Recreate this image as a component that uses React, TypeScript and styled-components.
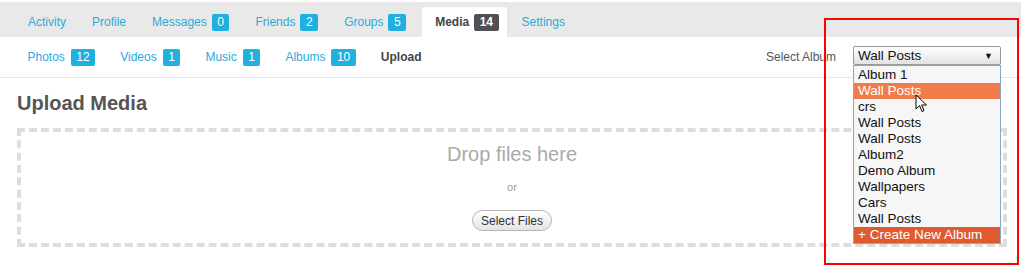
import React from 'react';
import styled, { createGlobalStyle } from 'styled-components';

const GlobalStyle = createGlobalStyle`
  html, body {
    margin: 0;
    padding: 0;
    background: #ffffff;
    font-family: 'Liberation Sans', Arial, sans-serif;
  }
`;

const Page = styled.div`
  position: relative;
  width: 1021px;
  height: 275px;
  padding-top: 2px;
  box-sizing: border-box;
  overflow: hidden;
`;

const MainNav = styled.div`
  display: flex;
  align-items: flex-end;
  height: 35px;
  padding-left: 15px;
  background: #e9e9e9;
`;

const Tab = styled.div<{ $active?: boolean }>`
  display: flex;
  align-items: center;
  gap: 5px;
  height: 30px;
  padding: ${(p) => (p.$active ? '0 8px 0 13px' : '0 13px')};
  font-size: 12px;
  color: ${(p) => (p.$active ? '#444' : '#29a9dd')};
  font-weight: ${(p) => (p.$active ? 'bold' : 'normal')};
  background: ${(p) => (p.$active ? '#ffffff' : 'transparent')};
  border-radius: 3px 3px 0 0;
  margin: ${(p) => (p.$active ? '0 2px 0 3px' : '0')};
`;

const Badge = styled.span<{ $dark?: boolean }>`
  display: inline-block;
  height: 17px;
  line-height: 17px;
  padding: 0 5.5px;
  border-radius: 2px;
  font-size: 12px;
  font-weight: ${(p) => (p.$dark ? 'bold' : 'normal')};
  color: #ffffff;
  background: ${(p) => (p.$dark ? '#505050' : '#1fb0e0')};
`;

const SubNav = styled.div`
  display: flex;
  align-items: center;
  height: 40px;
  padding: 0 20px 0 15px;
  border-bottom: 1px solid #e6e6e6;
`;

const SubTab = styled.div<{ $active?: boolean }>`
  display: flex;
  align-items: center;
  gap: 6px;
  padding: 0 12.5px;
  font-size: 12px;
  color: ${(p) => (p.$active ? '#444' : '#29a9dd')};
  font-weight: ${(p) => (p.$active ? 'bold' : 'normal')};
`;

const Spacer = styled.div`
  flex: 1;
`;

const AlbumLabel = styled.span`
  font-size: 12px;
  color: #555;
  margin-right: 17px;
`;

const SelectWrap = styled.div`
  position: relative;
  width: 148px;
  margin-top: -3px;
`;

const SelectBox = styled.div`
  display: flex;
  align-items: center;
  justify-content: space-between;
  height: 19px;
  padding: 0 7px 0 4px;
  box-sizing: border-box;
  border: 1px solid #999;
  border-radius: 2px;
  background: linear-gradient(#ffffff, #e2e2e2);
  font-size: 13.5px;
  color: #111;
`;

const Caret = styled.span`
  font-size: 9px;
  color: #111;
`;

const OptionList = styled.div`
  position: absolute;
  top: 19px;
  left: 0;
  width: 148px;
  box-sizing: border-box;
  padding-top: 1px;
  border: 1px solid #8fa4bd;
  background: #f6f6f6;
  z-index: 5;
`;

const Option = styled.div<{ $tone?: 'hover' | 'create' }>`
  height: 16px;
  line-height: 16px;
  padding-left: 4px;
  font-size: 13.5px;
  color: ${(p) => (p.$tone ? '#ffffff' : '#111')};
  background: ${(p) =>
    p.$tone === 'hover' ? '#f07b4b' : p.$tone === 'create' ? '#e05a31' : 'transparent'};
`;

const Content = styled.div`
  padding: 0 14px 0 17px;
`;

const Heading = styled.h2`
  margin: 13px 0 13px;
  font-size: 20px;
  line-height: 24px;
  font-weight: bold;
  color: #555;
`;

const DropZone = styled.div`
  display: flex;
  flex-direction: column;
  align-items: center;
  padding: 11px 0 12px;
  border: 4px dashed #dddddd;
`;

const DropText = styled.div`
  font-size: 20px;
  line-height: 22px;
  color: #aaa;
`;

const OrText = styled.div`
  margin-top: 14px;
  font-size: 11px;
  line-height: 16px;
  color: #999;
`;

const SelectButton = styled.button`
  margin-top: 15px;
  width: 80px;
  height: 21px;
  padding: 0;
  border: 1px solid #b5b5b5;
  border-radius: 11px;
  background: linear-gradient(#ffffff, #e4e4e4);
  font-family: 'Liberation Sans', Arial, sans-serif;
  font-size: 12px;
  color: #333;
`;

const Highlight = styled.div`
  position: absolute;
  left: 824px;
  top: 18px;
  width: 195px;
  height: 247px;
  box-sizing: border-box;
  border: 2px solid #ff0000;
  pointer-events: none;
`;

const Cursor = styled.svg`
  position: absolute;
  left: 915px;
  top: 94px;
  z-index: 10;
`;

const tabs = [
  { label: 'Activity' },
  { label: 'Profile' },
  { label: 'Messages', count: 0 },
  { label: 'Friends', count: 2 },
  { label: 'Groups', count: 5 },
  { label: 'Media', count: 14, active: true },
  { label: 'Settings' },
];

const subTabs = [
  { label: 'Photos', count: 12 },
  { label: 'Videos', count: 1 },
  { label: 'Music', count: 1 },
  { label: 'Albums', count: 10 },
  { label: 'Upload', active: true },
];

const albums = [
  'Album 1',
  'Wall Posts',
  'crs',
  'Wall Posts',
  'Wall Posts',
  'Album2',
  'Demo Album',
  'Wallpapers',
  'Cars',
  'Wall Posts',
];

const App: React.FC = () => {
  return (
    <>
      <GlobalStyle />
      <Page>
        <MainNav>
          {tabs.map((t) => (
            <Tab key={t.label} $active={t.active}>
              {t.label}
              {t.count !== undefined && <Badge $dark={t.active}>{t.count}</Badge>}
            </Tab>
          ))}
        </MainNav>
        <SubNav>
          {subTabs.map((t) => (
            <SubTab key={t.label} $active={t.active}>
              {t.label}
              {t.count !== undefined && <Badge>{t.count}</Badge>}
            </SubTab>
          ))}
          <Spacer />
          <AlbumLabel>Select Album</AlbumLabel>
          <SelectWrap>
            <SelectBox>
              Wall Posts
              <Caret>▼</Caret>
            </SelectBox>
            <OptionList>
              {albums.map((a, i) => (
                <Option key={i} $tone={i === 1 ? 'hover' : undefined}>
                  {a}
                </Option>
              ))}
              <Option $tone="create">+ Create New Album</Option>
            </OptionList>
          </SelectWrap>
        </SubNav>
        <Content>
          <Heading>Upload Media</Heading>
          <DropZone>
            <DropText>Drop files here</DropText>
            <OrText>or</OrText>
            <SelectButton>Select Files</SelectButton>
          </DropZone>
        </Content>
        <Highlight />
        <Cursor width="13" height="20" viewBox="0 0 13 20">
          <path
            d="M1 1 L1 15 L4.5 11.5 L7 17.5 L9 16.6 L6.6 11 L11.5 11 Z"
            fill="#ffffff"
            stroke="#000000"
            strokeWidth="1"
            strokeLinejoin="round"
          />
        </Cursor>
      </Page>
    </>
  );
};

export default App;
